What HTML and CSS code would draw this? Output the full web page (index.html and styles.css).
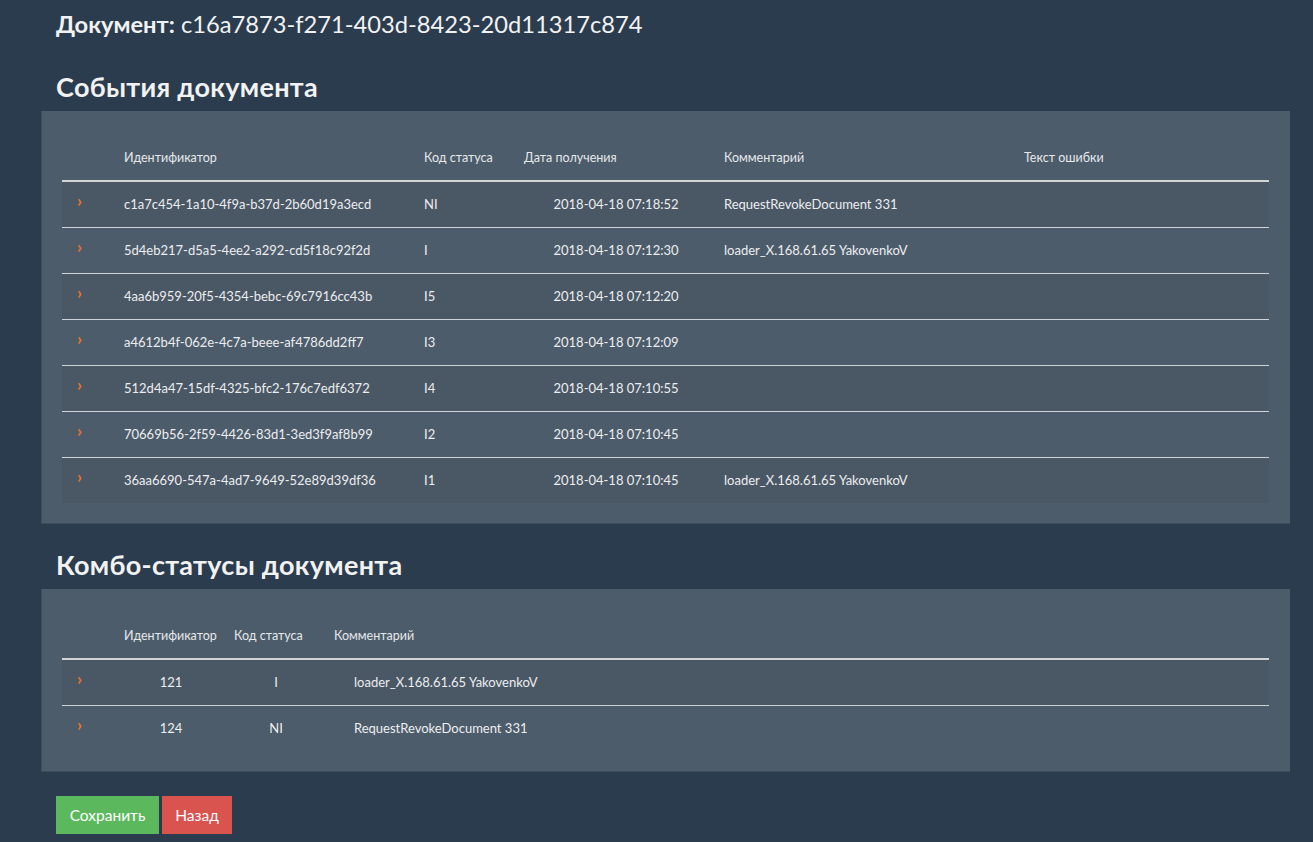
FILE: index.html
```html
<!DOCTYPE html>
<html lang="ru">
<head>
<meta charset="utf-8">
<link rel="stylesheet" href="styles.css">
</head>
<body>
<div class="page">
  <h1 class="doc-title"><b>Документ:</b> c16a7873-f271-403d-8423-20d11317c874</h1>

  <h2 class="section-title first">События документа</h2>
  <div class="panel">
    <table class="grid events">
      <thead>
        <tr>
          <th class="c-chev"></th>
          <th class="c-id">Идентификатор</th>
          <th class="c-code">Код статуса</th>
          <th class="c-date">Дата получения</th>
          <th class="c-comm">Комментарий</th>
          <th class="c-err">Текст ошибки</th>
        </tr>
      </thead>
      <tbody>
        <tr><td class="chev">›</td><td>c1a7c454-1a10-4f9a-b37d-2b60d19a3ecd</td><td>NI</td><td class="center">2018-04-18 07:18:52</td><td>RequestRevokeDocument 331</td><td></td></tr>
        <tr><td class="chev">›</td><td>5d4eb217-d5a5-4ee2-a292-cd5f18c92f2d</td><td>I</td><td class="center">2018-04-18 07:12:30</td><td>loader_X.168.61.65 YakovenkoV</td><td></td></tr>
        <tr><td class="chev">›</td><td>4aa6b959-20f5-4354-bebc-69c7916cc43b</td><td>I5</td><td class="center">2018-04-18 07:12:20</td><td></td><td></td></tr>
        <tr><td class="chev">›</td><td>a4612b4f-062e-4c7a-beee-af4786dd2ff7</td><td>I3</td><td class="center">2018-04-18 07:12:09</td><td></td><td></td></tr>
        <tr><td class="chev">›</td><td>512d4a47-15df-4325-bfc2-176c7edf6372</td><td>I4</td><td class="center">2018-04-18 07:10:55</td><td></td><td></td></tr>
        <tr><td class="chev">›</td><td>70669b56-2f59-4426-83d1-3ed3f9af8b99</td><td>I2</td><td class="center">2018-04-18 07:10:45</td><td></td><td></td></tr>
        <tr><td class="chev">›</td><td>36aa6690-547a-4ad7-9649-52e89d39df36</td><td>I1</td><td class="center">2018-04-18 07:10:45</td><td>loader_X.168.61.65 YakovenkoV</td><td></td></tr>
      </tbody>
    </table>
  </div>

  <h2 class="section-title">Комбо-статусы документа</h2>
  <div class="panel">
    <table class="grid combo">
      <thead>
        <tr>
          <th class="k-chev"></th>
          <th class="k-id">Идентификатор</th>
          <th class="k-code">Код статуса</th>
          <th class="k-comm">Комментарий</th>
        </tr>
      </thead>
      <tbody>
        <tr><td class="chev">›</td><td class="center">121</td><td class="center">I</td><td class="comm">loader_X.168.61.65 YakovenkoV</td></tr>
        <tr><td class="chev">›</td><td class="center">124</td><td class="center">NI</td><td class="comm">RequestRevokeDocument 331</td></tr>
      </tbody>
    </table>
  </div>

  <div class="actions">
    <button class="btn btn-save">Сохранить</button>
    <button class="btn btn-back">Назад</button>
  </div>
</div>
</body>
</html>
```

FILE: styles.css
```css
* { box-sizing: border-box; }
html, body {
  margin: 0;
  padding: 0;
  background: #2b3c4e;
  color: #eef0f2;
  font-family: Lato, "Noto Sans", sans-serif;
}
.page {
  padding: 7px 23px 0 41px;
}
.doc-title {
  margin: 0 0 0 15px;
  font-size: 23.7px;
  font-weight: 400;
  line-height: 34px;
  color: #f2f2f2;
}
.doc-title b { font-weight: 700; }
.section-title {
  margin: 26px 0 9px 15px;
  font-size: 27px;
  font-weight: 700;
  letter-spacing: 0.3px;
  line-height: 30px;
  color: #f2f2f2;
}
.section-title.first { margin-top: 31px; }
.panel {
  background: #4c5c6b;
  padding: 20px 21px 20px 20px;
  border-left: 1px solid #3f4e5c;
  border-bottom: 1px solid #3f4e5c;
}
.grid {
  width: 100%;
  border-collapse: collapse;
  table-layout: fixed;
  font-size: 13px;
  color: #eceef0;
}
.grid th {
  text-align: left;
  font-weight: 400;
  font-size: 12.5px;
  height: 50px;
  padding: 0 8px 15px 8px;
  vertical-align: bottom;
  border-bottom: 2px solid #d2d4d6;
  color: #e6e8ea;
}
.grid td {
  height: 46px;
  padding: 0 8px;
  vertical-align: middle;
  border-top: 1px solid #d0d3d6;
  white-space: nowrap;
}
.grid thead + tbody tr:first-child td { border-top: 0; }
.grid tbody tr:nth-child(odd) td { background: #4a5765; }
.grid td.center { text-align: center; }
.grid td.chev {
  color: #ea7426;
  font-size: 17px;
  font-weight: 700;
  padding-left: 15px;
  padding-bottom: 7px;
}
.c-chev { width: 54px; }
.c-id { width: 300px; }
.c-code { width: 100px; }
.c-date { width: 200px; }
.c-comm { width: 300px; }

.k-chev { width: 54px; }
.k-id { width: 110px; }
.k-code { width: 100px; }
.grid td.comm { padding-left: 28px; }

.actions {
  display: flex;
  gap: 3px;
  margin: 24px 0 0 15px;
}
.btn {
  border: 0;
  border-radius: 0;
  color: #fff;
  font-family: Lato, "Noto Sans", sans-serif;
  font-size: 15.5px;
  height: 38px;
  padding: 0 13px;
  cursor: pointer;
}
.btn-save { background: #5cb85c; width: 103px; }
.btn-back { background: #d9534f; width: 70px; }
```
